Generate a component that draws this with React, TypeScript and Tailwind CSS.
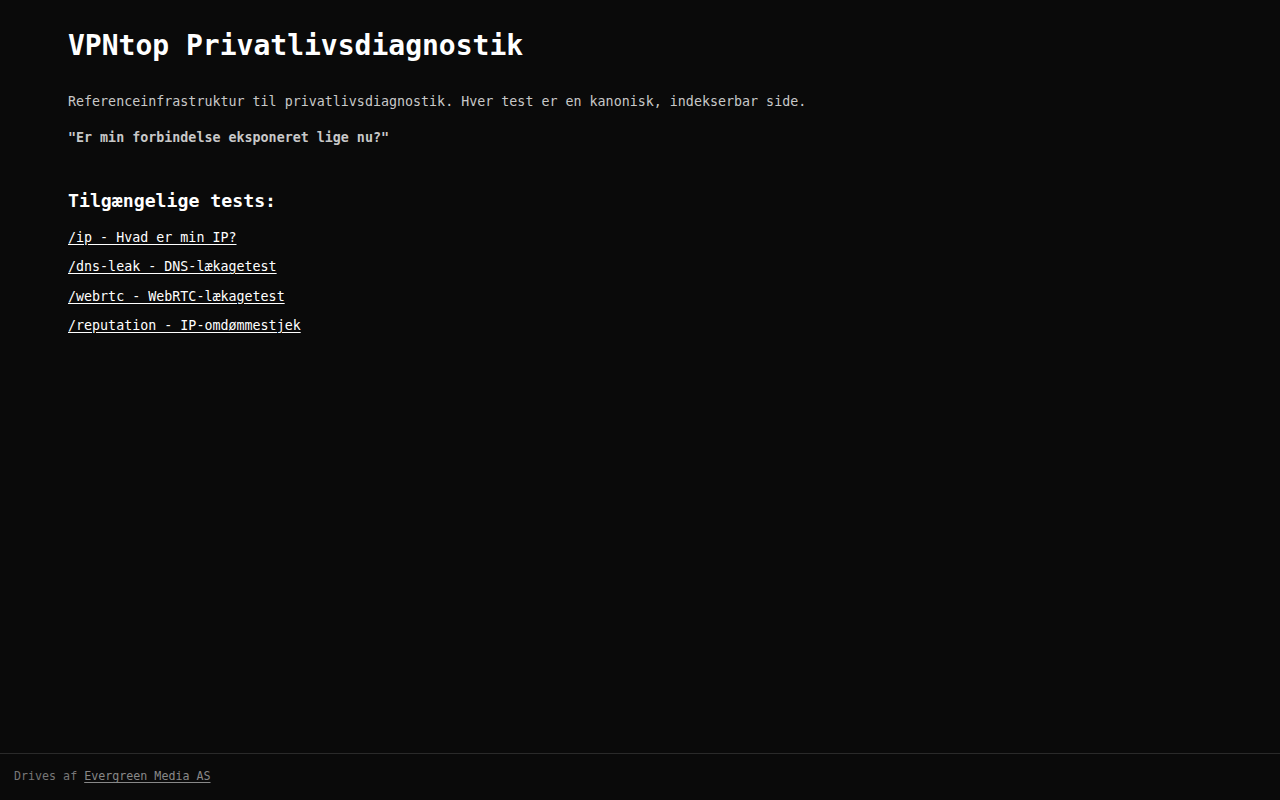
const tests = [
  { href: "/ip", label: "/ip - Hvad er min IP?" },
  { href: "/dns-leak", label: "/dns-leak - DNS-lækagetest" },
  { href: "/webrtc", label: "/webrtc - WebRTC-lækagetest" },
  { href: "/reputation", label: "/reputation - IP-omdømmestjek" },
];

export default function App() {
  return (
    <div className="flex min-h-screen flex-col bg-[#0a0a0a] font-['DejaVu_Sans_Mono','Liberation_Mono',monospace] text-[#e5e5e5]">
      <main className="flex-1 px-[68px] pt-[27px]">
        <h1 className="text-[28px] font-bold leading-[38px] text-white">VPNtop Privatlivsdiagnostik</h1>
        <p className="mt-[28px] text-[13.33px] leading-[18px] text-[#c8c8c8]">
          Referenceinfrastruktur til privatlivsdiagnostik. Hver test er en kanonisk, indekserbar side.
        </p>
        <p className="mt-[18px] text-[13.33px] font-bold leading-[18px] text-[#c8c8c8]">
          "Er min forbindelse eksponeret lige nu?"
        </p>
        <h2 className="mt-[41px] text-[18.2px] font-bold leading-[26px] text-white">Tilgængelige tests:</h2>
        <ul className="mt-[15px] flex flex-col gap-[11.3px]">
          {tests.map(t => (
            <li key={t.href} className="text-[13.33px] leading-[18px]">
              <a href={t.href} className="text-white underline underline-offset-2">{t.label}</a>
            </li>
          ))}
        </ul>
      </main>
      <footer className="flex h-[47px] items-center border-t border-[#2a2a2a] px-[14px] text-[11.67px] text-[#777]">
        Drives af&nbsp;<a href="#" className="text-[#888] underline underline-offset-2">Evergreen Media AS</a>
      </footer>
    </div>
  );
}
